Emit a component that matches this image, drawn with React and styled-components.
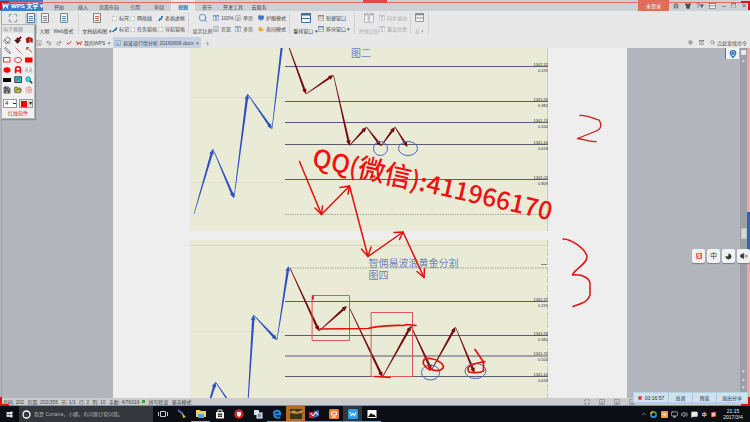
import React from 'react';
import styled, { createGlobalStyle, css } from 'styled-components';
import {
  Bug, Check, ChevronUp, Eraser, FolderOpen, MapPin, Maximize, MessageSquare,
  Monitor, Moon, Paintbrush, Pen, Redo2, Save, Search, Settings, Shirt, Undo2, Volume2, VolumeX,
} from 'lucide-react';
import { FaEdge, FaWindows } from 'react-icons/fa';

const GlobalStyle = createGlobalStyle`
  * { box-sizing: border-box; }
  body {
    margin: 0;
    overflow: hidden;
    font-family: "Liberation Sans", "Noto Sans CJK SC", sans-serif;
    font-size: 5px;
    line-height: 6px;
    color: #45484c;
  }
  button, input, select {
    font: inherit;
    color: inherit;
    margin: 0;
    padding: 0;
    border: 0;
    background: none;
  }
  svg { display: block; flex: none; }
`;

const Screen = styled.div`
  position: relative;
  display: flex;
  flex-direction: column;
  height: 100vh;
  overflow: hidden;
  background: #e8e8e8;
`;

/* ---------- title bar ---------- */
const TitleBar = styled.header`
  display: flex;
  height: 11px;
  flex: none;
  background: #ced1d4;
`;

const AppButton = styled.button`
  display: flex;
  align-items: center;
  gap: 2px;
  width: 43px;
  padding-left: 2px;
  margin-right: 4px;
  background: #3b80c6;
  color: #fff;
  font-size: 6px;
  font-weight: bold;
  white-space: nowrap;
`;

const MenuTab = styled.button`
  min-width: 24px;
  padding: 2px 4px 0;
  white-space: nowrap;
  ${({ $active }) => $active && css`
    background: #e8e8e8;
    color: #2f78bd;
    font-weight: bold;
  `}
`;

const Spacer = styled.div`
  flex: ${({ $grow }) => $grow || 1};
`;

const LoginButton = styled.button`
  width: 31px;
  background: #dc7050;
  color: #fff;
`;

const WindowTools = styled.div`
  display: flex;
  align-items: center;
  justify-content: space-between;
  width: 81px;
  padding: 0 4px;
  button { display: grid; place-items: center; font-size: 7px; }
`;

/* ---------- ribbon ---------- */
const Ribbon = styled.div`
  display: flex;
  flex: none;
  height: 26px;
  padding: 2px 0 3px;
`;

const BigButton = styled.button`
  display: flex;
  flex-direction: column;
  align-items: center;
  justify-content: space-between;
  width: ${({ $w }) => $w}px;
  white-space: nowrap;
  color: ${({ $off }) => ($off ? '#a9abad' : '#45484c')};
  background: ${({ $active }) => ($active ? '#b9cde3' : 'none')};
`;

const Stack = styled.div`
  display: flex;
  flex-direction: column;
  justify-content: space-between;
  width: ${({ $w }) => $w}px;
  padding: 1px 0;
`;

const SmallButton = styled.button`
  display: flex;
  align-items: center;
  gap: 2px;
  height: 8px;
  white-space: nowrap;
  color: ${({ $off }) => ($off ? '#a9abad' : '#45484c')};
`;

const CheckLabel = styled.label`
  display: flex;
  align-items: center;
  gap: 2px;
  height: 8px;
  white-space: nowrap;
  input {
    appearance: none;
    width: 5px;
    height: 5px;
    border: 1px solid #cfcfcf;
    background: #f8f8f8;
  }
  input:checked {
    border: 0;
    background: linear-gradient(135deg, #e8eef5 40%, #3b7fc4 40% 70%, #e8eef5 70%);
  }
`;

const Divider = styled.span`
  width: 1px;
  margin: 0 3px;
  background: #d2d2d2;
`;

/* ---------- document tabs ---------- */
const TabRow = styled.div`
  display: flex;
  flex: none;
  align-items: center;
  height: 11px;
  padding-left: 36px;
`;

const QuickTools = styled.div`
  display: flex;
  justify-content: space-between;
  width: 36px;
`;

const DocTab = styled.button`
  display: flex;
  align-items: center;
  gap: 2px;
  height: 11px;
  width: ${({ $w }) => $w}px;
  padding: 0 2px;
  margin-left: 2px;
  white-space: nowrap;
  background: ${({ $active }) => ($active ? '#c5d2e3' : 'none')};
  span { flex: 1; text-align: left; }
`;

const FindBox = styled.div`
  display: flex;
  align-items: center;
  gap: 6px;
  padding-right: 3px;
  button { display: flex; gap: 2px; white-space: nowrap; }
`;

/* ---------- document ---------- */
const Workspace = styled.main`
  display: flex;
  flex: 1;
  min-height: 0;
  justify-content: center;
  background: #b2b6bc;
`;

const Gutter = styled.div`
  flex: 1;
  display: flex;
  justify-content: flex-end;
  align-items: flex-start;
`;

const Paper = styled.article`
  display: flex;
  flex-direction: column;
  align-items: center;
  gap: 9px;
  width: 514px;
  padding-right: 2px;
  overflow: hidden;
  background: #eee;
`;

const Chart = styled.svg`
  background: #e9ebd7;
  text { font-family: "Liberation Sans", "Noto Sans CJK SC", sans-serif; }
`;

const PinButton = styled.button`
  display: grid;
  place-items: center;
  width: 14px;
  height: 11px;
  margin-right: 1px;
  border-left: 1px solid #3b80c6;
  background: #f1f3f5;
`;

const Scrollbar = styled.div`
  display: flex;
  flex-direction: column;
  align-items: center;
  gap: 2px;
  width: 7px;
  padding: 2px 0 8px;
  background: #9da1a7;
  color: #e4e6e8;
`;

const Thumb = styled.span`
  width: 6px;
  height: 11px;
  background: #d5d7d9;
  border: 1px solid #bfc2c5;
`;

const SideEdge = styled.div`
  width: 3px;
  background: #e6a9ae;
  padding-top: 164px;
  &::after {
    content: "";
    display: block;
    height: 38px;
    background: #3c5fb4;
  }
`;

const StatusBar = styled.footer`
  display: flex;
  flex: none;
  align-items: center;
  gap: 3px;
  height: 8px;
  padding: 0 115px 0 3px;
  background: #cbcccd;
  border-bottom: 1px solid #dfe3e5;
  white-space: nowrap;
  i { width: 3px; height: 3px; background: #35a32b; }
`;

const ViewIcons = styled.div`
  display: flex;
  gap: 9px;
`;

/* ---------- taskbar ---------- */
const Taskbar = styled.nav`
  display: flex;
  flex: none;
  height: 16px;
  background: #0b0f14;
  color: #e8eaec;
`;

const StartButton = styled.button`
  display: grid;
  place-items: center;
  width: 19px;
`;

const CortanaBox = styled.label`
  display: flex;
  align-items: center;
  gap: 3px;
  width: 134px;
  padding: 0 3px;
  background: #33363a;
  input { flex: 1; min-width: 0; }
  input::placeholder { color: #aeb1b4; opacity: 1; }
`;

const TaskButton = styled.button`
  display: grid;
  place-items: center;
  width: 19px;
  background: ${({ $bg }) => $bg || 'none'};
  border-bottom: 1px solid ${({ $open }) => ($open ? '#6cabdc' : 'transparent')};
`;

const Tray = styled.div`
  display: flex;
  align-items: center;
  justify-content: space-between;
  width: 76px;
  margin-right: 4px;
`;

const Clock = styled.time`
  width: 24px;
  margin-right: 5px;
  padding-top: 2px;
  text-align: center;
`;

/* ---------- floating pieces ---------- */
const Palette = styled.aside`
  position: absolute;
  left: 1px;
  top: 24px;
  width: 34px;
  background: #f0f0f0;
  border: 1px solid #b5b5b5;
  box-shadow: 1px 1px 1px #8a8d91;
`;

const PaletteTitle = styled.div`
  height: 8px;
  padding: 1px;
  background: #e4e5e6;
  color: #96999c;
`;

const ToolGrid = styled.div`
  display: grid;
  grid-template-columns: repeat(3, 1fr);
  grid-auto-rows: 10px;
  padding: 2px 0 1px;
  button { display: grid; place-items: center; }
`;

const PenOptions = styled.div`
  display: flex;
  justify-content: space-between;
  padding: 3px 1px 2px;
  select, button {
    appearance: none;
    width: 14px;
    height: 9px;
    padding-left: 1px;
    border: 1px solid #999;
    font-size: 6px;
    line-height: 7px;
    color: #222;
  }
  select {
    background: linear-gradient(#333, #333) 9px 3px / 3px 1px no-repeat, #fff;
  }
  button { display: flex; align-items: center; gap: 2px; background: #e4e4e4; }
  button i { width: 6px; height: 6px; background: #f00; }
`;

const PaletteBrand = styled.div`
  height: 8px;
  color: #e32222;
  text-align: center;
`;

const ImeBar = styled.div`
  position: absolute;
  right: 0;
  top: 249px;
  display: flex;
  gap: 2px;
  button {
    display: grid;
    place-items: center;
    width: 13px;
    height: 14px;
    border-radius: 2px;
    background: #f1f1f1;
    box-shadow: 0 1px 1px #7b7f85;
    font-size: 7px;
    color: #333;
  }
`;

const ShareBar = styled.div`
  position: absolute;
  right: 2px;
  bottom: 19px;
  display: flex;
  height: 11px;
  background: #cfe3ef;
  border: 1px solid #b2d3e8;
  color: #26323c;
  > * {
    display: flex;
    align-items: center;
    justify-content: center;
    gap: 3px;
    width: 24px;
    border-right: 1px solid #a9c8dc;
    white-space: nowrap;
  }
  > :first-child { width: 35px; }
  > :last-child { width: 30px; border: 0; }
  i { width: 4px; height: 4px; border-radius: 50%; background: #e33; }
`;

const Ink = styled.svg`
  position: absolute;
  left: 0;
  top: 0;
  pointer-events: none;
  text { font-family: "Noto Sans CJK SC", sans-serif; }
`;

const FrameLine = styled.div`
  position: absolute;
  left: 0;
  right: 0;
  top: 2px;
  bottom: 16px;
  border: solid #e8696d;
  border-width: 1px 0;
  pointer-events: none;
  &::before {
    content: "";
    position: absolute;
    left: 1px;
    top: 0;
    bottom: 0;
    width: 1px;
    background: #e48a8d;
  }
`;

const Corner = styled.i`
  position: absolute;
  width: 9px;
  height: 9px;
  pointer-events: none;
  ${({ $at }) => $at.includes('t')
    ? 'top: 1px; border-top: 2px solid #e01010;'
    : 'bottom: 16px; border-bottom: 2px solid #e01010;'}
  ${({ $at }) => $at.includes('l')
    ? 'left: 0; border-left: 2px solid #e01010;'
    : 'right: 0; border-right: 2px solid #e01010;'}
`;

const TopMark = styled.i`
  position: absolute;
  top: 0;
  left: 363px;
  width: 24px;
  height: 3px;
  background: #e04a48;
`;

// A line that swells toward its tip and ends in a solid head
const Taper = ({ from, to, w = 1.8 }) => {
  const [x1, y1] = from;
  const [x2, y2] = to;
  const len = Math.hypot(x2 - x1, y2 - y1);
  const ux = (x2 - x1) / len;
  const uy = (y2 - y1) / len;
  const at = (d, s) => `${x1 + ux * d - uy * s},${y1 + uy * d + ux * s}`;
  const neck = len - 5;
  return (
    <polygon
      points={[at(0, 0.3), at(neck, w / 2), at(neck, 2.3), at(len, 0), at(neck, -2.3), at(neck, -w / 2), at(0, -0.3)].join(' ')}
    />
  );
};

const Wave = ({ points, color, w }) => (
  <g fill={color}>
    {points.slice(1).map((p, i) => <Taper key={i} from={points[i]} to={p} w={w} />)}
  </g>
);

const Level = ({ y, price, ratio }) => (
  <g>
    <path d={`M285 ${y}H548`} stroke="#5a5b70" strokeWidth="1.2" />
    <g fontSize="4" fill="#2c2c4c" textAnchor="end">
      <text x="548" y={y - 1}>{price}</text>
      <text x="548" y={y + 5}>{ratio}</text>
    </g>
  </g>
);

const BLUE = '#2f50c2';
const MAROON = '#760b0e';

const ChartTwo = () => (
  <Chart width="358" height="183" viewBox="190 48 358 183">
    <path d="M190 97.5H285M190 182.5H285" stroke="#dcdecb" />
    <path d="M547.5 48V231" stroke="#c9cf9f" />
    <path d="M285 214.5H548" stroke="#a3a596" strokeDasharray="1.5 1" />
    <Level y={66.5} price="1342.32" ratio="0.191" />
    <Level y={101.5} price="1341.95" ratio="0.382" />
    <Level y={122.5} price="1341.70" ratio="0.500" />
    <Level y={144.5} price="1341.44" ratio="0.618" />
    <Level y={179.5} price="1341.03" ratio="0.809" />
    <text x="351" y="57" fontSize="10" fill="#6c82c0">图二</text>
    <Wave color={BLUE} w={2.4} points={[[194, 214], [213, 149], [234, 198], [247.5, 94], [272, 129], [284, 28]]} />
    <Wave color={MAROON} w={2.2} points={[[286, 39], [306, 94], [333.5, 75], [349.5, 145.5], [366.5, 127], [381, 146], [395, 127], [407.5, 147]]} />
    <g fill="none" stroke="#4766bb">
      <circle cx="380.5" cy="148.5" r="7" />
      <ellipse cx="408" cy="148.5" rx="9.5" ry="7" />
    </g>
  </Chart>
);

const ChartFour = () => (
  <Chart width="358" height="170" viewBox="190 240 358 170">
    <path d="M190 245.5H548" stroke="#d3d6b9" />
    <path d="M190 331.5H285" stroke="#dcdecb" />
    <path d="M547.5 240V400" stroke="#c5c9ae" strokeDasharray="7 2" />
    <path d="M290 268H548" stroke="#a3a596" strokeDasharray="1.5 1" />
    <path d="M541 264.5H547" stroke="#888" />
    <Level y={301.5} price="1342.37" ratio="0.191" />
    <Level y={335.5} price="1341.95" ratio="0.382" />
    <Level y={356} price="1341.70" ratio="0.500" />
    <Level y={376.5} price="1341.44" ratio="0.618" />
    <g fontSize="10" fill="#6c82c0">
      <text x="368.5" y="266.5">智佣易波浪黄金分割</text>
      <text x="368.5" y="279">图四</text>
    </g>
    <Wave color={BLUE} w={2.4} points={[[204, 420], [215.5, 382], [240, 418], [247, 418], [253.5, 315], [277, 340], [288.5, 266]]} />
    <Wave color={MAROON} w={2.3} points={[[290, 268], [319, 331], [347, 306]]} />
    <Wave color={MAROON} w={2.3} points={[[350, 309], [382.5, 377], [411, 326], [431.5, 370], [455.5, 327], [474.5, 373]]} />
    <g fill="none" stroke="#4766bb">
      <ellipse cx="430.5" cy="372.5" rx="9" ry="7.5" />
      <ellipse cx="475.5" cy="371" rx="10.5" ry="7.5" />
    </g>
  </Chart>
);

const Doc = ({ size = 8, color = '#7d8288', accent }) => (
  <svg width={size} height={size} viewBox="0 0 10 10" fill="none" stroke={color}>
    <path d="M1.5.5H8.5V9.5H1.5Z" fill="#f5f5f5" />
    <path d="M3 3.5H7M3 5.5H7M3 7.5H7" stroke={accent || color} />
  </svg>
);

const Panes = ({ size = 7, color = '#7d8288', top }) => (
  <svg width={size} height={size} viewBox="0 0 10 10" fill="none" stroke={color}>
    <path d={top ? 'M.5 .5H9.5V9.5H.5ZM.5 5.5H9.5' : 'M.5 .5H4.2V9.5H.5ZM5.8 .5H9.5V9.5H5.8Z'} fill="#f3f4f5" />
    <path d={top ? 'M0 1.5H10' : 'M.5 1.5H4M6 1.5H9.5'} strokeWidth="2" />
  </svg>
);

const Tile = ({ color, children, size = 10 }) => (
  <svg width={size} height={size} viewBox="0 0 10 10">
    <rect width="10" height="10" rx="1.5" fill={color} />
    {children}
  </svg>
);

const WMark = ({ color = '#fff', size = 7 }) => (
  <svg width={size} height={size} viewBox="0 0 10 10" fill="none" stroke={color} strokeWidth="1.6">
    <path d="M1 2L2.5 8L5 3.5L7.5 8L9 2" />
  </svg>
);

const SogouMark = ({ size = 8 }) => (
  <svg width={size} height={size} viewBox="0 0 10 10">
    <path d="M1 2L8.5 1L9 8L2 9Z" fill="#e2563a" />
    <path d="M7 3L3.5 3.5V5L6.5 5V6.5L3 7" fill="none" stroke="#fff" strokeWidth="1.1" />
  </svg>
);

const tools = [
  ['橡皮', <Eraser size={8} color="#444" />],
  ['画刷', <Paintbrush size={8} color="#b01818" fill="#222" />],
  ['填充', <svg width="8" height="8" viewBox="0 0 10 10"><path d="M1 3L5 1L6 8L2 9Z" fill="#a11" /><path d="M5 2L9 3V8L6 6" fill="#e22" stroke="#611" /></svg>],
  ['画笔', <Pen size={7} color="#222" style={{ transform: 'scaleX(-1)' }} />],
  ['直线', <svg width="8" height="8" viewBox="0 0 10 10"><path d="M2 2L9 9" stroke="#d77" strokeWidth="1.2" /></svg>],
  ['箭头', <svg width="8" height="8" viewBox="0 0 10 10"><path d="M9 8L2 2M2 5V2H5" fill="none" stroke="#d33" strokeWidth="1.2" /></svg>],
  ['矩形', <svg width="8" height="6"><rect x=".5" y=".5" width="6.5" height="4.5" fill="#fff" stroke="#e33" /></svg>],
  ['椭圆', <svg width="8" height="6"><ellipse cx="4" cy="3" rx="3.5" ry="2.5" fill="#fff" stroke="#e33" /></svg>],
  ['实心矩形', <svg width="8" height="6"><rect y=".5" width="7.5" height="5" fill="#f00" /></svg>],
  ['实心椭圆', <svg width="8" height="6"><ellipse cx="4" cy="3" rx="3.5" ry="2.8" fill="#f00" /></svg>],
  ['文字', <svg width="8" height="8" viewBox="0 0 10 10" fill="none" stroke="#d11" strokeWidth="2"><path d="M2 9V4Q2 1 5 1T8 4V9M2 6H8" /></svg>],
  ['放大', <svg width="8" height="8" viewBox="0 0 10 10" fill="none" stroke="#aaa"><path d="M0 8L2 2L4 8M1 6H3M5 8L7 2L9 8M6 6H8" /></svg>],
  ['黑板', <svg width="8" height="5"><rect width="8" height="4" fill="#000" /></svg>],
  ['屏幕', <svg width="8" height="8" viewBox="0 0 10 10"><rect x="1" y="1" width="8.5" height="7" fill="#22c7cf" stroke="#222" /><path d="M3 6L5 3L7 6" fill="none" stroke="#c22" /></svg>],
  ['查找', <svg width="8" height="8" viewBox="0 0 10 10"><path d="M6 6L9 9" stroke="#222" strokeWidth="1.6" /><circle cx="4" cy="4" r="3" fill="#35e0ea" stroke="#14838c" /></svg>],
  ['保存', <Save size={8} color="#222" fill="#999" />],
  ['打开', <FolderOpen size={8} color="#4c4a22" fill="#c5b94a" />],
  ['设置', <Settings size={8} color="#e26a6a" />],
];

const menus = ['开始', '插入', '页面布局', '引用', '审阅', '视图', '章节', '开发工具', '云服务'];

const apps = [
  ['任务视图', <svg width="10" height="8" viewBox="0 0 10 8" fill="none" stroke="#ccc"><path d="M2.5 1.5H7.5V6.5H2.5ZM.5 2V6M9.5 2V6" /></svg>],
  ['画图', <svg width="10" height="10" viewBox="0 0 10 10"><path d="M1 1L6 5" stroke="#4768bd" strokeWidth="2" /><path d="M5 4L9 8L6 9Z" fill="#e2b83d" /></svg>],
  ['文件', <svg width="10" height="9" viewBox="0 0 10 9"><path d="M0 1H4L5 2H10V8H0Z" fill="#f1cf67" /><path d="M2 5H8V9H2Z" fill="#4fa9dd" /></svg>, true],
  ['商店', <svg width="10" height="10" viewBox="0 0 10 10"><path d="M3 3V1H7V3" fill="none" stroke="#eee" /><path d="M1 3H9V9.5H1Z" fill="#eee" /><path d="M3 4.5H4.8V6H3ZM5.2 4.5H7V6H5.2ZM3 6.4H4.8V8H3ZM5.2 6.4H7V8H5.2Z" fill="#222" /></svg>],
  ['安全', <svg width="10" height="10" viewBox="0 0 10 10"><circle cx="5" cy="5" r="4.7" fill="#d8212b" /><path d="M3 3H7V6L5 8L3 6Z" fill="#fff" /></svg>],
  ['远程', <svg width="10" height="10" viewBox="0 0 10 10"><rect x="1" y="1" width="5" height="5" fill="#d6dce6" /><rect x="4" y="4" width="5" height="5" fill="#7b92b8" stroke="#fff" /></svg>],
  ['浏览器', <svg width="10" height="10" viewBox="0 0 10 10" fill="none" stroke="#1f8be0" strokeWidth="2"><path d="M2.2 5.3H8.3C8.3 .5 2.5 .7 1.5 4.5M2.2 5.3C2.2 9 6 9.4 8.3 8" /></svg>, true],
  ['录像', <svg width="12" height="10" viewBox="0 0 12 10"><rect width="12" height="10" fill="#393421" /><path d="M0 3L4 1L7 3L12 1V4L6 5L0 4Z" fill="#b98d4c" /></svg>, true, '#b56a22'],
  ['交易', <svg width="11" height="10" viewBox="0 0 11 10"><rect y="3" width="6" height="6" fill="#c5293a" /><path d="M5 2L10 1V7L5 9Z" fill="#4968b2" /><path d="M2 4L4 7L7 3L9 6" fill="none" stroke="#fff" /></svg>, true],
  ['演示', <Tile color="#ef7b3c"><path d="M2.5 3H7.5V6H2.5ZM3 8H7" fill="none" stroke="#fff" /></Tile>, true],
  ['文字', <Tile color="#349ee4"><path d="M2 3L3.5 7L5 4L6.5 7L8 3" fill="none" stroke="#fff" /></Tile>, true, '#30383f'],
  ['图片', <svg width="10" height="10" viewBox="0 0 10 10"><rect x=".5" y="1" width="9" height="8" fill="#fff" /><path d="M1 8L4 4L6 6L7 5L9 8Z" fill="#111" /></svg>, true],
];

const CheckItem = ({ label, on }) => (
  <CheckLabel><input type="checkbox" defaultChecked={on} />{label}</CheckLabel>
);

const RibbonBar = () => (
  <Ribbon>
    <BigButton $w={25} aria-label="全屏显示"><Maximize size={10} color="#777" /></BigButton>
    <BigButton $w={12} $active aria-label="页面"><Doc size={10} color="#5079a8" /></BigButton>
    <BigButton $w={15}><Doc size={10} /><span>大纲</span></BigButton>
    <BigButton $w={23}><Doc size={10} accent="#5b8fc4" /><span>Web版式</span></BigButton>
    <Divider />
    <BigButton $w={30}><Doc size={10} accent="#d4695a" /><span>文档结构图 ▾</span></BigButton>
    <Stack $w={18}><CheckItem label="标尺" /><CheckItem label="标记" on /></Stack>
    <Stack $w={28}><CheckItem label="网格线" /><CheckItem label="任务窗格" /></Stack>
    <Stack $w={27}><CheckItem label="表格虚框" on /><CheckItem label="导航窗格" /></Stack>
    <Divider />
    <BigButton $w={21}><Search size={10} color="#4a86c6" /><span>显示比例</span></BigButton>
    <Stack $w={22}>
      <SmallButton><Panes size={6} color="#5d84ae" />100%</SmallButton>
      <SmallButton><Doc size={6} />页宽</SmallButton>
    </Stack>
    <Stack $w={23}>
      <SmallButton><Doc size={6} />单页</SmallButton>
      <SmallButton><Panes size={6} color="#6c90b8" />多页</SmallButton>
    </Stack>
    <Stack $w={28}>
      <SmallButton><Monitor size={6} color="#3d72c4" fill="#3d72c4" />护眼模式</SmallButton>
      <SmallButton><Moon size={6} color="#e9a52c" fill="#e9a52c" />夜间模式</SmallButton>
    </Stack>
    <Divider />
    <BigButton $w={25}><Panes size={10} color="#496a91" top /><span>重排窗口 ▾</span></BigButton>
    <Stack $w={33}>
      <SmallButton><Panes size={6} color="#8a7754" top />新建窗口</SmallButton>
      <SmallButton><Panes size={6} color="#4a78b4" top />拆分窗口 ▾</SmallButton>
    </Stack>
    <Divider />
    <BigButton $w={21} $off><Panes size={10} color="#b4b6b8" /><span>并排比较</span></BigButton>
    <Stack $w={28}>
      <SmallButton $off><Panes size={6} color="#b4b6b8" />同步滚动</SmallButton>
      <SmallButton $off><Panes size={6} color="#b4b6b8" />重设位置</SmallButton>
    </Stack>
    <Divider />
    <BigButton $w={11} $off><Panes size={9} color="#888b8e" top /><span>宏 ▾</span></BigButton>
    <Divider />
  </Ribbon>
);

const InkLayer = () => (
  <Ink width="750" height="422" viewBox="0 0 750 422" fill="none" stroke="#e20f0f" strokeLinecap="round" strokeLinejoin="round">
    <text x="311" y="166" transform="rotate(12.8 311 166)" fontSize="25" fontWeight="500" fill="#f01010" stroke="none">
      QQ(<tspan fontSize="27">微信</tspan>):411966170
    </text>
    <g strokeWidth="1.5">
      <path d="M299.5 161.5L321.5 214.5L349.5 186L368 256.5L403 232L424 277.5" />
      <path d="M315 208L321.5 214.5L322.5 206M340 187.5L349.5 186L348 194M361.5 249L368 256.5L371 247M394 232.5L403 232L399.5 239.5M417 271.5L424 277.5L424.5 268.5" />
    </g>
    <path strokeWidth="1.3" stroke="#d81818" d="M580 115.500C588 115 592 118 599 120C602 124 602 129 595 131.500L577.500 138.500C584 139 588 142 596 141.500" />
    <path strokeWidth="1.5" d="M563 239C572 239 585 249 587 256C588 264 573 270 572.500 275C584 274 590 279 590 284V295C588 302 582 303 573 306.500" />
    <g stroke="#e05555">
      <path d="M312.5 295.5H349.5V340.5H312.5Z" />
      <path d="M371.5 312.5H412.5V376.5H371.5Z" />
    </g>
    <g strokeWidth="1.7">
      <path d="M313 296V299" />
      <path d="M319 329L368 328.5C378 326 395 325 403 325.5L407 324.5L416 325.5" />
      <path d="M375 376.5L383 377L390 377.5" />
      <path d="M430 370C420 364 422 358 430 358.5C438 359 445 365 443 368C440 372 432 371 429 367" />
      <path d="M475 349.5L483.5 362V371C480 373 475 373 469 372C465 366 472 364 485 361.5" />
    </g>
  </Ink>
);

export default function App() {
  return (
    <>
      <GlobalStyle />
      <Screen>
        <TitleBar>
          <AppButton><WMark />WPS 文字 ▾</AppButton>
          {menus.map((m) => <MenuTab key={m} $active={m === '视图'}>{m}</MenuTab>)}
          <Spacer />
          <LoginButton>未登录</LoginButton>
          <WindowTools>
            <button aria-label="反馈"><Bug size={6} /></button>
            <button aria-label="皮肤"><Shirt size={6} fill="#45484c" /></button>
            <button>?▾</button>
            <button aria-label="功能区"><Panes size={7} color="#666" top /></button>
            <button>–</button>
            <button aria-label="还原"><Panes size={5} color="#666" top /></button>
            <button>×</button>
          </WindowTools>
        </TitleBar>
        <RibbonBar />
        <TabRow>
          <QuickTools>
            <Doc size={6} /><Undo2 size={6} /><Redo2 size={6} /><Check size={6} color="#d22" strokeWidth={4} />
          </QuickTools>
          <DocTab $w={37}><WMark color="#d33a32" size={6} /><span>我的WPS</span>×</DocTab>
          <DocTab $w={88} $active><Doc size={6} color="#4a78b4" /><span>易波浪行情分析 20160606.docx</span>×</DocTab>
          <DocTab $w={12}><span>＋</span></DocTab>
          <Spacer />
          <FindBox>
            <Settings size={5} /><Panes size={5} color="#666" />
            <button><Search size={5} />点此查找命令</button>
          </FindBox>
        </TabRow>

        <Workspace>
          <Gutter />
          <Paper>
            <ChartTwo />
            <ChartFour />
          </Paper>
          <Gutter>
            <PinButton aria-label="定位"><MapPin size={8} color="#2a74bd" strokeWidth={4} /></PinButton>
          </Gutter>
          <Scrollbar>
            <Panes size={5} color="#e4e6e8" top />
            <span>▴</span>
            <Spacer $grow={9} />
            <Thumb />
            <Spacer $grow={7} />
            <span>▾</span>
            <span>▴</span>
            <span>▾</span>
          </Scrollbar>
          <SideEdge />
        </Workspace>

        <StatusBar>
          <span>页码: 202</span><span>页面: 202/355</span><span>节: 1/1</span>
          <span>行: 2</span><span>列: 10</span><span>字数: 4/76016</span>
          <i /><span>拼写检查</span><span>兼容模式</span>
          <Spacer />
          <ViewIcons>
            <Maximize size={6} /><Doc size={6} color="#555" /><Doc size={6} color="#555" /><Doc size={6} color="#555" />
          </ViewIcons>
        </StatusBar>

        <Taskbar>
          <StartButton aria-label="开始菜单"><FaWindows size={7} /></StartButton>
          <CortanaBox>
            <svg width="9" height="9" aria-hidden="true"><circle cx="4.5" cy="4.5" r="3.5" fill="none" stroke="#fff" strokeWidth="1.3" /></svg>
            <input aria-label="Cortana" placeholder="我是 Cortana，小娜。有问题尽管问我。" />
          </CortanaBox>
          {apps.map(([name, icon, open, bg]) => (
            <TaskButton key={name} aria-label={name} $open={open} $bg={bg}>{icon}</TaskButton>
          ))}
          <Spacer />
          <Tray>
            <ChevronUp size={6} />
            <svg width="7" height="7" viewBox="0 0 8 8" fill="none" strokeWidth="2"><path d="M1 4A3 3 0 0 1 4 1" stroke="#e8b32c" /><path d="M4 1A3 3 0 0 1 7 4" stroke="#42a34a" /><path d="M7 4A3 3 0 0 1 1 4" stroke="#3a92dd" /></svg>
            <Tile color="#f0a136" size={7}><path d="M2 4H8L5 7Z" fill="#fff" /></Tile>
            <Monitor size={7} /><Volume2 size={7} /><MessageSquare size={7} fill="#e8eaec" />
            <b>中</b>
            <SogouMark size={7} />
          </Tray>
          <Clock>21:15<br />2017/3/4</Clock>
        </Taskbar>

        <InkLayer />
        <FrameLine />
        <TopMark />
        <Corner $at="tl" /><Corner $at="tr" /><Corner $at="bl" /><Corner $at="br" />

        <Palette>
          <PaletteTitle>电子教鞭</PaletteTitle>
          <ToolGrid>
            {tools.map(([name, icon]) => <button key={name} aria-label={name}>{icon}</button>)}
          </ToolGrid>
          <PenOptions>
            <select aria-label="笔宽" defaultValue="4"><option>2</option><option>4</option><option>6</option></select>
            <button aria-label="颜色"><i />▾</button>
          </PenOptions>
          <PaletteBrand>红烛软件</PaletteBrand>
        </Palette>

        <ImeBar>
          <button aria-label="输入法"><SogouMark /></button>
          <button>中</button>
          <button aria-label="半角"><Moon size={7} fill="#333" style={{ transform: 'scaleX(-1)' }} /></button>
          <button aria-label="静音"><VolumeX size={8} fill="#333" /></button>
        </ImeBar>
        <ShareBar>
          <span><i />00:16:57</span>
          <button>高清</button>
          <button>预览</button>
          <button>退出分享</button>
        </ShareBar>
      </Screen>
    </>
  );
}
